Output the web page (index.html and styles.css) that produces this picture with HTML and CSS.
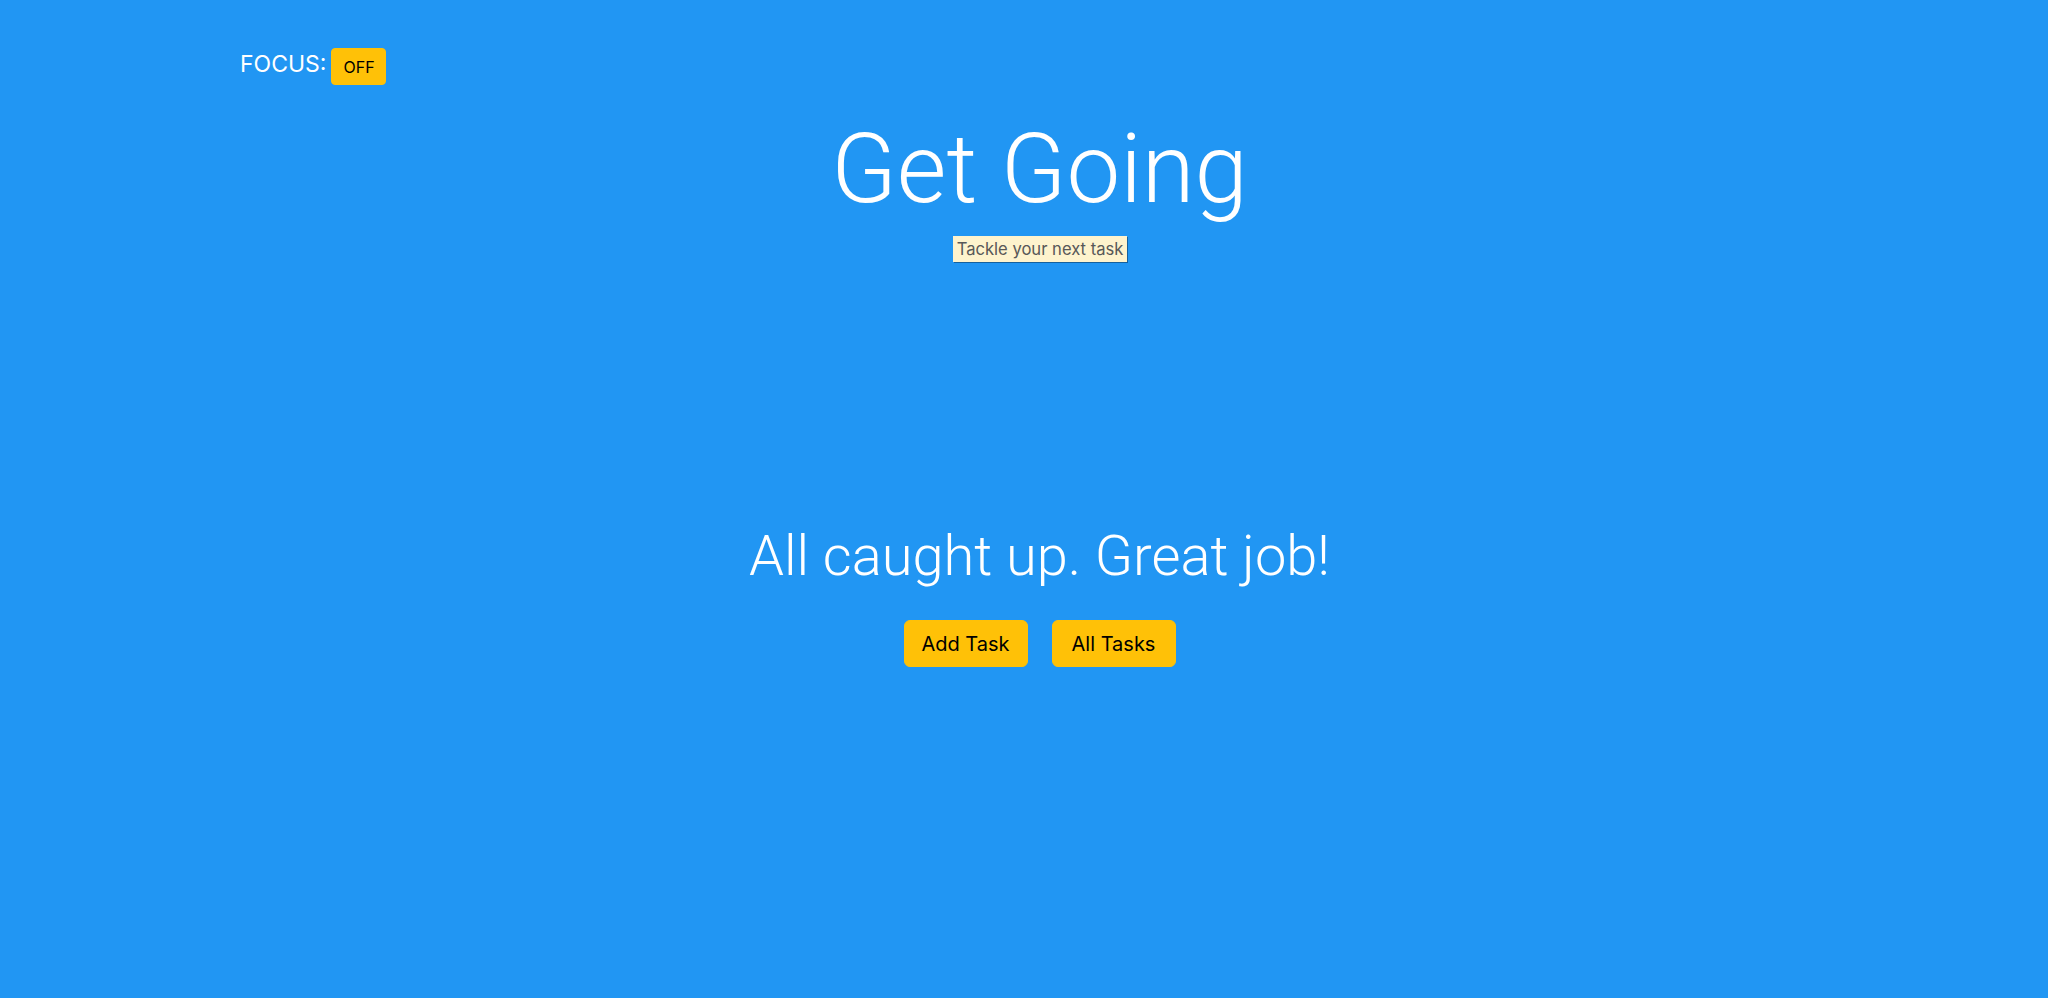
FILE: index.html
```html
<!DOCTYPE html>
<html lang="en">
<head>
<meta charset="utf-8">
<title>Get Going</title>
<link rel="stylesheet" href="styles.css">
</head>
<body>
  <header class="topbar">
    <span class="focus-label">FOCUS:</span>
    <button class="btn btn-focus">OFF</button>
  </header>
  <div class="content">
    <h1 class="title">Get Going</h1>
    <main class="empty">
      <h2 class="empty-msg">All caught up. Great job!</h2>
      <div class="actions">
        <button class="btn btn-lg">Add Task</button>
        <button class="btn btn-lg">All Tasks</button>
      </div>
    </main>
  </div>
  <div class="tooltip">Tackle your next task</div>
</body>
</html>
```

FILE: styles.css
```css
html, body {
  margin: 0;
  padding: 0;
}
body {
  background: #2196f3;
  color: #fff;
  font-family: "Inter", "Roboto", "Liberation Sans", sans-serif;
  min-height: 998px;
  position: relative;
}
.topbar {
  display: flex;
  align-items: center;
  gap: 5px;
  padding: 47px 0 0 240px;
  height: 38px;
}
.focus-label {
  font-size: 23px;
  font-weight: 400;
  line-height: 1;
  margin-top: -4px;
}
.btn {
  font-family: inherit;
  background: #ffc107;
  color: #000;
  border: 1px solid #ffc107;
  border-radius: 4px;
  cursor: pointer;
}
.btn-focus {
  font-size: 16px;
  line-height: 24px;
  padding: 6px 11px;
  width: 55px;
  height: 37px;
}
.content {
  padding-left: 31px;
}
.title {
  margin: 27px 0 0;
  text-align: center;
  font-family: "Roboto", "Inter", sans-serif;
  font-size: 96px;
  font-weight: 300;
  line-height: 115px;
}
.empty {
  margin-top: 296px;
  display: flex;
  flex-direction: column;
  align-items: center;
}
.empty-msg {
  margin: 0;
  font-family: "Roboto", "Inter", sans-serif;
  font-size: 56px;
  font-weight: 300;
  line-height: 67px;
}
.actions {
  display: flex;
  gap: 24px;
  margin-top: 30px;
}
.btn-lg {
  font-size: 20px;
  line-height: 30px;
  padding: 7px 16px;
  width: 124px;
  height: 47px;
  border-radius: 6px;
}
.tooltip {
  position: absolute;
  left: 953px;
  top: 236px;
  width: 174px;
  height: 26px;
  box-sizing: border-box;
  background: #fef3cd;
  color: #585858;
  font-size: 16.6px;
  line-height: 26px;
  text-align: center;
  box-shadow: 1px 1px 0 rgba(0, 0, 0, 0.35);
  white-space: nowrap;
}
```
